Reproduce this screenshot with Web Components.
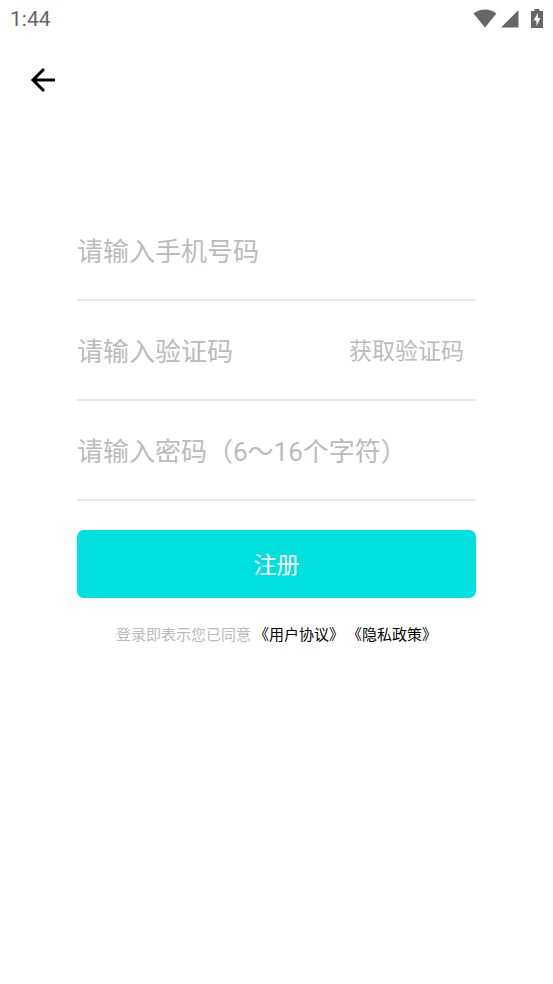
<!DOCTYPE html>
<html lang="zh-CN">
<head>
<meta charset="utf-8">
<meta name="viewport" content="width=device-width, initial-scale=1">
<title>注册</title>
<style>
  body { margin: 0; background: #fff; font-family: Roboto, "Noto Sans CJK SC", sans-serif; text-spacing-trim: space-all; }
</style>
</head>
<body>
<register-page></register-page>
<script>
const define = (name, html, setup) => {
  const template = document.createElement('template');
  template.innerHTML = html;
  customElements.define(name, class extends HTMLElement {
    constructor() {
      super();
      this.attachShadow({ mode: 'open' }).append(template.content.cloneNode(true));
    }
    connectedCallback() { if (setup) setup(this, this.shadowRoot); }
  });
};

define('status-bar', `
  <style>
    :host { display: flex; align-items: center; justify-content: space-between; height: 38px; padding: 0 10px; color: #666; font-size: 21px; line-height: 24px; }
    .icons { display: flex; align-items: center; }
    svg { display: block; fill: currentColor; }
    .signal { margin: 0 12px 0 4px; }
  </style>
  <span><slot></slot></span>
  <div class="icons">
    <svg width="24" height="20" viewBox="0 0 24 20"><path d="M0.500 4.500C7-1 17-1 23.500 4.500L12 18.500Z"/></svg>
    <svg class="signal" width="18" height="20" viewBox="0 0 18 20"><path d="M17.500 1V18.500H0Z"/></svg>
    <svg width="12" height="20" viewBox="0 0 12 20"><path fill-rule="evenodd" d="M3.500 0H8.500V2H12V19H0V2H3.500ZM7 4L2.500 11.500H5.500V17L9.500 9H7Z"/></svg>
  </div>`);

define('top-bar', `
  <style>
    :host { display: flex; padding: 26px 27px; }
    button { display: block; padding: 0; border: 0; background: none; color: #000; }
    svg { display: block; }
  </style>
  <button type="button" aria-label="返回">
    <svg width="32" height="32" viewBox="0 0 32 32" fill="none" stroke="currentColor" stroke-width="3"><path d="M28 16H6M17 5L6 16L17 27"/></svg>
  </button>`);

define('form-field', `
  <style>
    :host { display: flex; align-items: center; height: 94px; padding-top: 4px; border-bottom: 2px solid #e8e8e8; }
    input { flex: 1; min-width: 0; padding: 0; border: 0; outline: 0; background: none; color: #333; font: inherit; font-size: 26px; line-height: 40px; height: 40px; }
    input::placeholder { color: #bbb; opacity: 1; }
  </style>
  <input>
  <slot></slot>`, (host, root) => {
  const input = root.querySelector('input');
  input.type = host.getAttribute('type') || 'text';
  input.placeholder = host.getAttribute('label');
  input.setAttribute('aria-label', host.getAttribute('label'));
});

define('code-button', `
  <style>
    :host { display: block; padding-right: 12px; }
    button { display: block; padding: 0; border: 0; background: none; color: #bbb; font: inherit; font-size: 23px; line-height: 34px; }
  </style>
  <button type="button"><slot></slot></button>`);

define('submit-button', `
  <style>
    :host { display: block; }
    button { display: block; width: 100%; height: 68px; padding: 4px 0 0; border: 0; border-radius: 7px; background: #00e0de; color: #fff; font: inherit; font-size: 23px; line-height: 34px; }
  </style>
  <button type="submit"><slot></slot></button>`);

define('agreement-note', `
  <style>
    :host { display: flex; justify-content: center; gap: 3px; font-size: 15px; line-height: 24px; color: #bbb; white-space: nowrap; }
    ::slotted(a) { color: #000; text-decoration: none; }
  </style>
  <slot></slot>`);

define('register-page', `
  <style>
    :host { display: block; }
    form { display: flex; flex-direction: column; margin: 0 77px; padding-top: 79px; }
    submit-button { margin-top: 29px; }
    agreement-note { margin-top: 25px; }
  </style>
  <status-bar>1:44</status-bar>
  <top-bar></top-bar>
  <form>
    <form-field label="请输入手机号码" type="tel"></form-field>
    <form-field label="请输入验证码"><code-button>获取验证码</code-button></form-field>
    <form-field label="请输入密码（6～16个字符）" type="password"></form-field>
    <submit-button>注册</submit-button>
    <agreement-note><span>登录即表示您已同意</span><a href="#terms">《用户协议》</a><a href="#privacy">《隐私政策》</a></agreement-note>
  </form>`);
</script>
</body>
</html>
